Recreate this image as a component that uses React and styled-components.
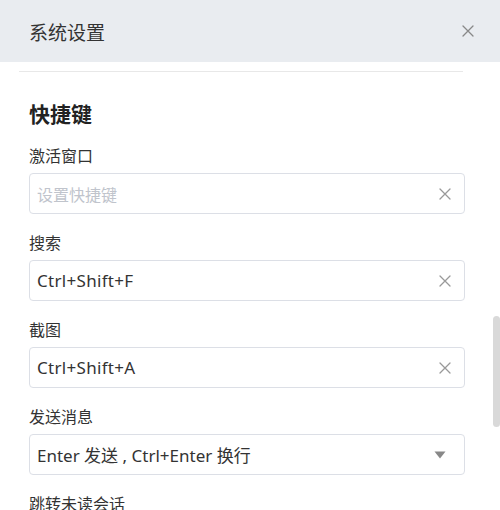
import React from "react";
import styled, { createGlobalStyle } from "styled-components";

const Global = createGlobalStyle`
  html, body { margin: 0; padding: 0; background: #fff; }
  body { width: 500px; height: 510px; overflow: hidden;
    font-family: "Noto Sans", "Noto Sans CJK SC", sans-serif; }
`;

const Panel = styled.div`
  position: relative;
  width: 500px;
  height: 510px;
  overflow: hidden;
  background: #fff;
`;

const Header = styled.div`
  height: 62px;
  background: #e9ecf0;
  display: flex;
  align-items: center;
  justify-content: space-between;
  padding: 0 26px 0 29px;
`;

const Title = styled.div`
  font-size: 19px;
  color: #333;
  font-family: "Noto Sans CJK SC", sans-serif;
`;

const Divider = styled.div`
  height: 1px;
  background: #e8e8e8;
  margin: 9px 37px 0 19px;
`;

const Body = styled.div`
  padding: 0 35px 0 29px;
  display: flex;
  flex-direction: column;
`;

const SectionTitle = styled.div`
  margin-top: 27px;
  font-size: 21px;
  line-height: 28px;
  font-weight: 700;
  color: #222;
  font-family: "Noto Sans CJK SC", sans-serif;
`;

const Field = styled.div`
  display: flex;
  flex-direction: column;
  margin-top: 17px;
`;

const Label = styled.div`
  font-size: 16px;
  line-height: 22px;
  color: #333;
  font-family: "Noto Sans CJK SC", sans-serif;
`;

const Box = styled.div`
  margin-top: 7px;
  height: 41px;
  box-sizing: border-box;
  border: 1px solid #dcdfe6;
  border-radius: 4px;
  display: flex;
  align-items: center;
  justify-content: space-between;
  padding: 0 13px 0 7px;
`;

const Value = styled.span`
  font-size: ${(p) => (p.$placeholder ? "16px" : "17px")};
  letter-spacing: ${(p) => (p.$spaced ? "0.3px" : "0")};
  color: ${(p) => (p.$placeholder ? "#c0c4cc" : "#333")};
  font-family: "Noto Sans", "Noto Sans CJK SC", sans-serif;
`;

const Thumb = styled.div`
  position: absolute;
  right: 0;
  top: 316px;
  width: 7px;
  height: 111px;
  border-radius: 4px;
  background: #d9d9d9;
`;

const XIcon = ({ color = "#999", size = 12 }) => (
  <svg width={size} height={size} viewBox="0 0 12 12">
    <path d="M1 1L11 11M11 1L1 11" stroke={color} strokeWidth="1.3" strokeLinecap="round" />
  </svg>
);

const Caret = () => (
  <svg width="12" height="8" viewBox="0 0 12 8" style={{ marginRight: 5 }}>
    <path d="M0.5 0.5H11.5L6 7.5Z" fill="#888" />
  </svg>
);

const fields = [
  { label: "激活窗口", value: "设置快捷键", placeholder: true },
  { label: "搜索", value: "Ctrl+Shift+F", spaced: true },
  { label: "截图", value: "Ctrl+Shift+A", spaced: true },
  { label: "发送消息", value: "Enter 发送 , Ctrl+Enter 换行", select: true },
  { label: "跳转未读会话", value: "" },
];

export default function App() {
  return (
    <Panel>
      <Global />
      <Header>
        <Title>系统设置</Title>
        <XIcon color="#888" size={12} />
      </Header>
      <Divider />
      <Body>
        <SectionTitle>快捷键</SectionTitle>
        {fields.map((f) => (
          <Field key={f.label}>
            <Label>{f.label}</Label>
            <Box>
              <Value $placeholder={f.placeholder} $spaced={f.spaced}>
                {f.value}
              </Value>
              {f.select ? <Caret /> : <XIcon />}
            </Box>
          </Field>
        ))}
      </Body>
      <Thumb />
    </Panel>
  );
}
